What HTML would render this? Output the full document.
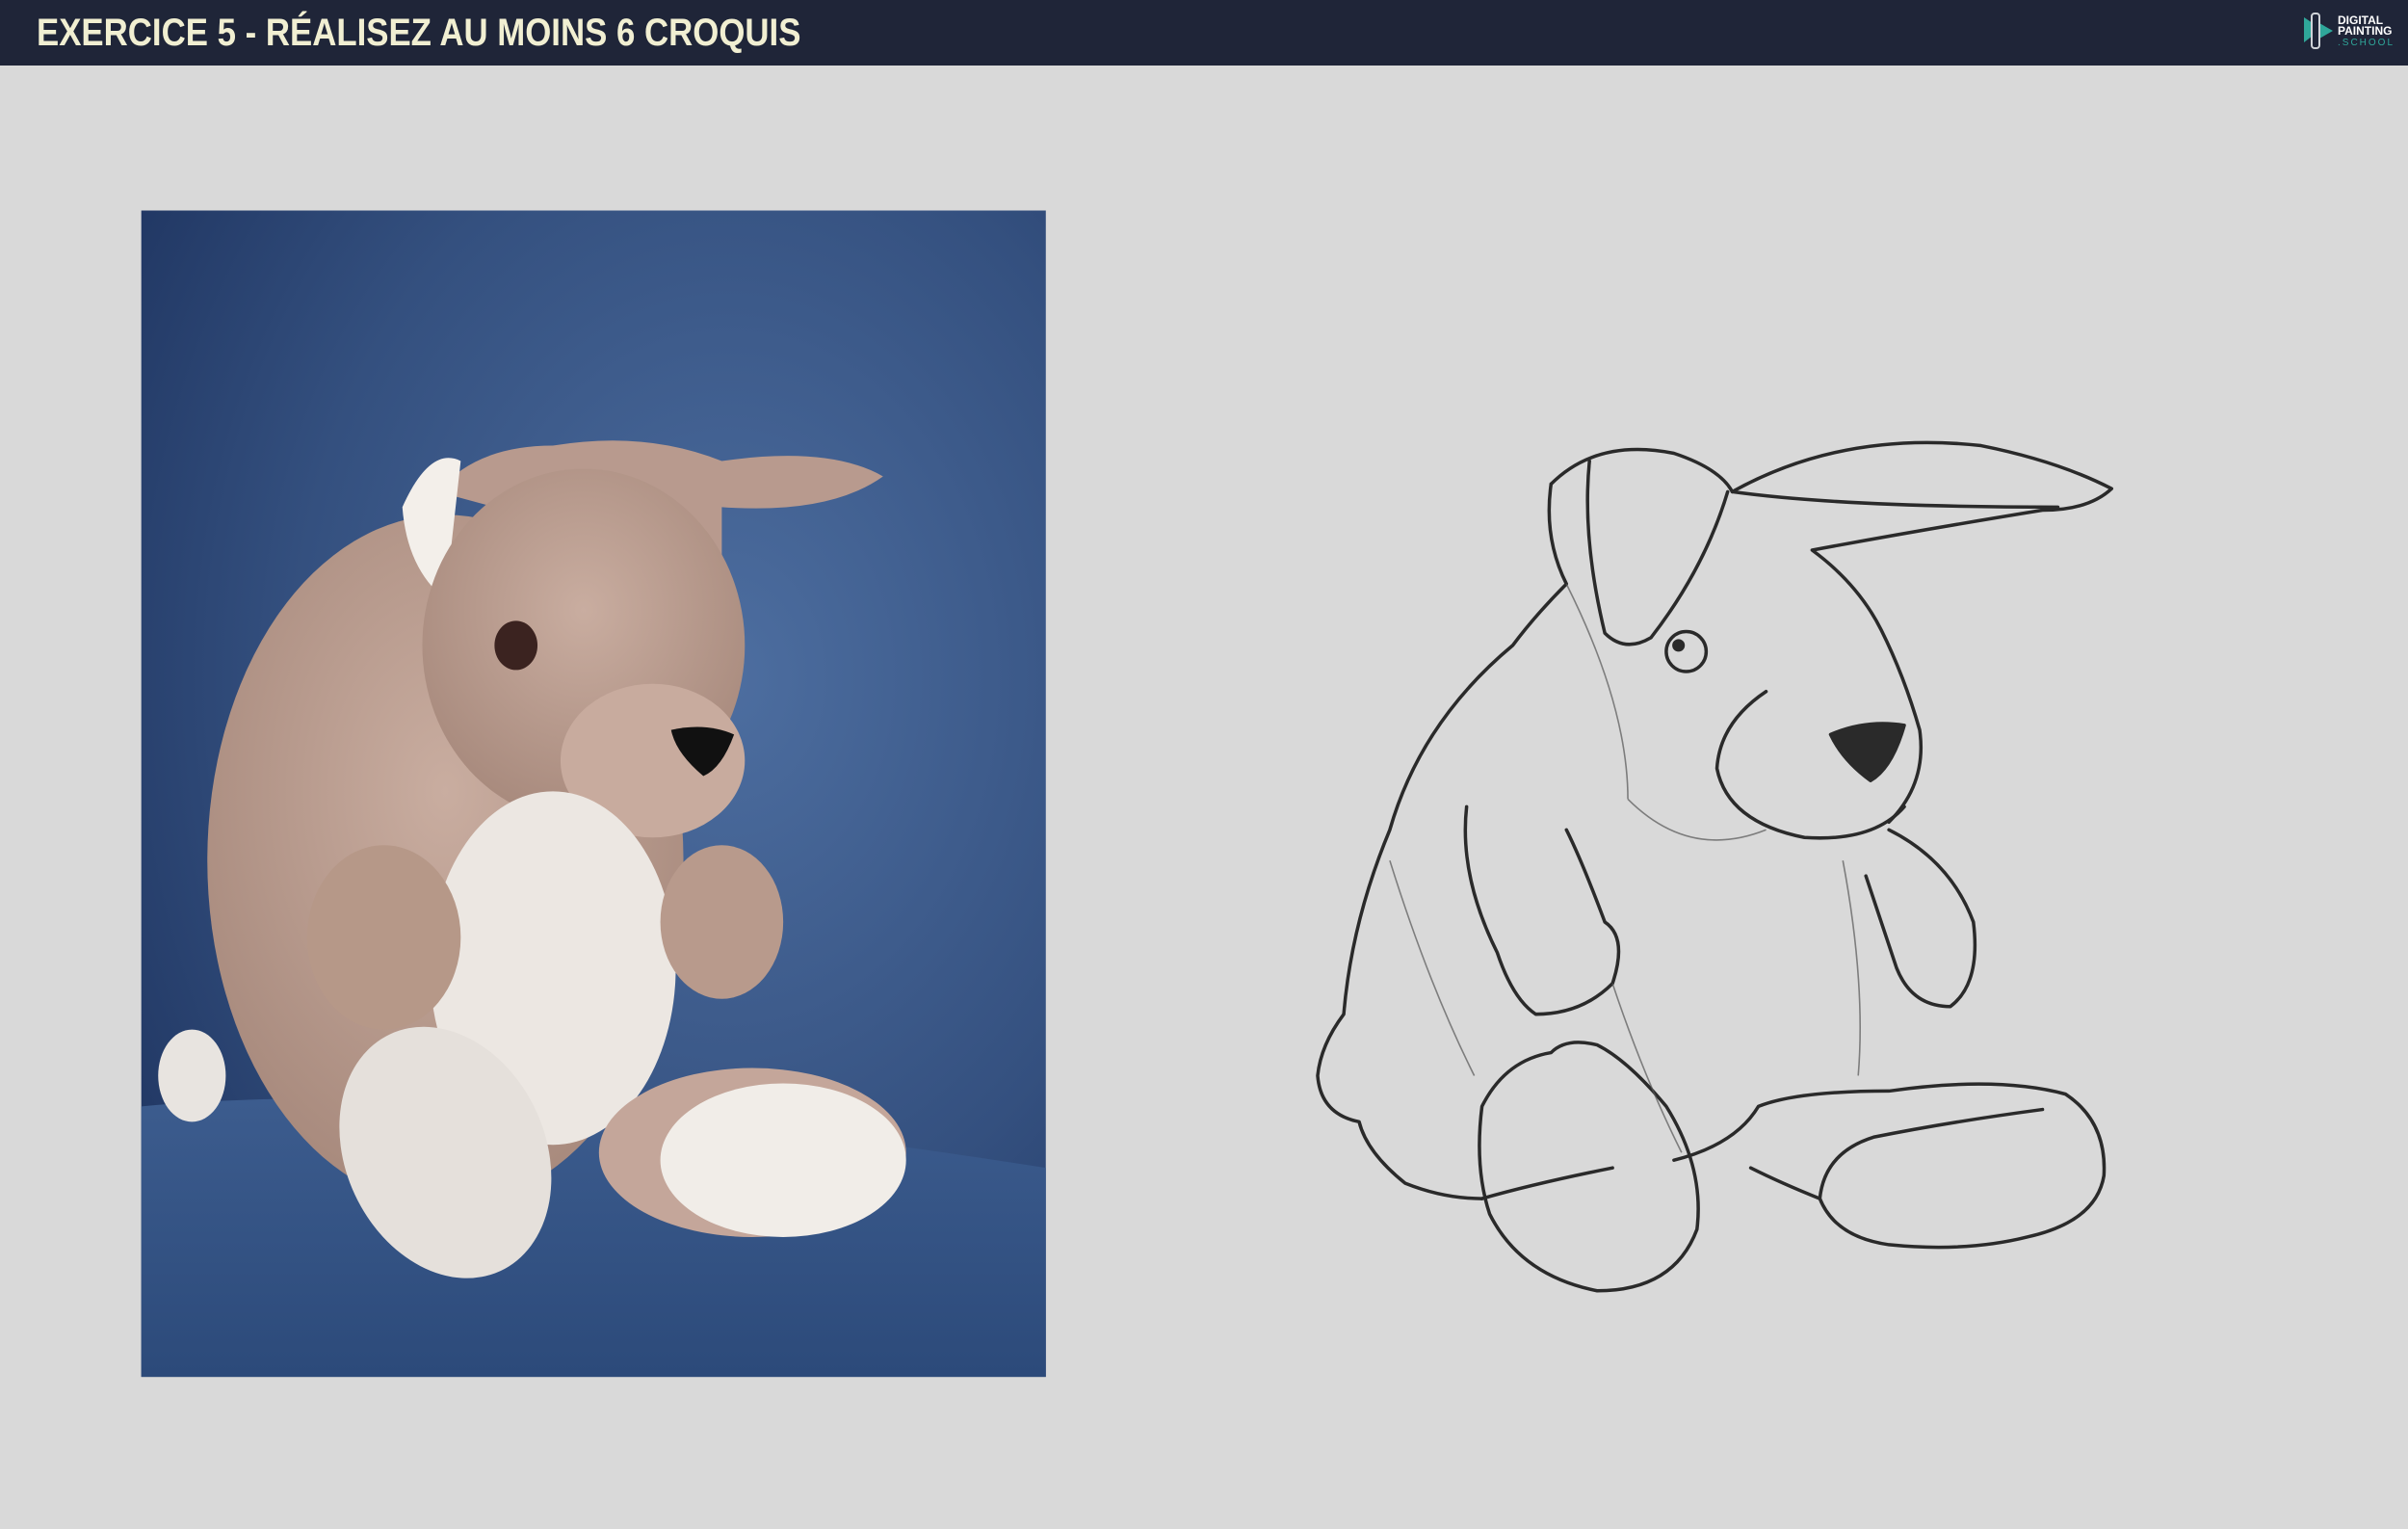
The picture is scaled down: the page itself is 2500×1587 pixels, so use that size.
<!DOCTYPE html>
<html><head><meta charset="utf-8"><style>
html,body{margin:0;padding:0;width:2500px;height:1587px;overflow:hidden;background:#d9d9d9;}
.hdr{position:absolute;left:0;top:0;width:2500px;height:68px;background:#1f2538;}
.ttl{position:absolute;left:38px;top:12px;font-family:"Liberation Sans",sans-serif;font-weight:bold;font-size:40px;color:#f1efd2;white-space:nowrap;transform:scaleX(0.87);transform-origin:0 0;letter-spacing:0px;}
.logo{position:absolute;left:2427px;top:16px;font-family:"Liberation Sans",sans-serif;font-weight:bold;color:#fff;font-size:12px;line-height:11px;}
.logo .s{color:#2fa79a;font-weight:normal;letter-spacing:2px;font-size:10px}
svg{position:absolute;left:0;top:0}
</style></head><body>
<div class="hdr"></div>
<div class="ttl">EXERCICE 5 - RÉALISEZ AU MOINS 6 CROQUIS</div>
<svg width="40" height="50" style="left:2390px;top:10px" viewBox="0 0 40 50">
<polygon points="2,8 20,20 2,34" fill="#2fa79a"/><polygon points="18,14 32,22 18,30" fill="#2fa79a"/>
<rect x="10" y="4" width="8" height="36" rx="3" fill="#1f2538" stroke="#cfd3d8" stroke-width="2"/>
</svg>
<div class="logo">DIGITAL<br>PAINTING<br><span class="s">.SCHOOL</span></div>
<svg width="2500" height="1587" viewBox="0 0 1568 995" preserveAspectRatio="none">
<defs>
<radialGradient id="bg" cx="0.65" cy="0.4" r="0.8"><stop offset="0" stop-color="#4d6ea0"/><stop offset="0.6" stop-color="#34507f"/><stop offset="1" stop-color="#1f3561"/></radialGradient>
<linearGradient id="fl" x1="0" y1="0" x2="0" y2="1"><stop offset="0" stop-color="#3c5c8e"/><stop offset="1" stop-color="#2c4a7a"/></linearGradient>
<radialGradient id="tan" cx="0.5" cy="0.4" r="0.6"><stop offset="0" stop-color="#c9ada0"/><stop offset="1" stop-color="#a88a7d"/></radialGradient>
</defs>
<rect x="92" y="137" width="589" height="759" fill="url(#bg)"/>
<path d="M92 720 Q300 700 681 760 L681 896 L92 896Z" fill="url(#fl)"/>
<ellipse cx="125" cy="700" rx="22" ry="30" fill="#e8e4e0"/>
<ellipse cx="290" cy="560" rx="155" ry="225" fill="url(#tan)"/>
<path d="M285 320 Q310 290 360 290 Q420 280 470 300 Q540 290 575 310 Q540 335 470 330 Q470 350 470 370 Z" fill="#b89a8e"/>
<path d="M262 330 Q280 290 300 300 L290 390 Q265 370 262 330Z" fill="#f3efea"/>
<ellipse cx="380" cy="420" rx="105" ry="115" fill="url(#tan)"/>
<ellipse cx="425" cy="495" rx="60" ry="50" fill="#c8ab9e"/>
<path d="M437 475 Q460 470 478 478 Q470 500 458 505 Q440 490 437 475Z" fill="#111"/>
<ellipse cx="336" cy="420" rx="14" ry="16" fill="#3b2320"/>
<ellipse cx="360" cy="630" rx="80" ry="115" fill="#ece7e2"/>
<ellipse cx="470" cy="600" rx="40" ry="50" fill="#b89a8c"/>
<ellipse cx="250" cy="610" rx="50" ry="60" fill="#b69888"/>
<ellipse cx="290" cy="750" rx="65" ry="85" fill="#e5e0db" transform="rotate(-25 290 750)"/>
<ellipse cx="490" cy="750" rx="100" ry="55" fill="#c4a69a"/>
<ellipse cx="510" cy="755" rx="80" ry="50" fill="#f1ede8"/>
<g fill="none" stroke="#2a2a2a" stroke-width="2.2" stroke-linejoin="round" stroke-linecap="round">
<path d="M1010 315 Q1040 285 1090 295 Q1120 305 1128 320 Q1200 280 1290 290 Q1340 300 1375 318 Q1360 332 1330 332 Q1250 345 1180 358 Q1210 380 1225 410 Q1240 440 1250 475 Q1255 510 1230 535"/>
<path d="M1010 315 Q1005 350 1020 380 Q1000 400 985 420 Q925 470 905 540 Q880 600 875 660 Q860 680 858 700 Q860 725 885 730 Q890 750 915 770 Q940 780 965 780"/>
<path d="M1035 300 Q1030 350 1045 412 Q1058 425 1075 415 Q1110 370 1125 320"/>
<path d="M1128 320 Q1200 330 1340 330"/>
<circle cx="1098" cy="424" r="13"/><circle cx="1093" cy="420" r="3" fill="#2a2a2a"/>
<path d="M1150 450 Q1120 470 1118 500 Q1125 535 1175 545 Q1220 548 1240 525"/>
<path d="M1192 478 Q1215 468 1240 472 Q1232 500 1218 508 Q1200 495 1192 478Z" fill="#2a2a2a"/>
<path d="M1230 540 Q1270 560 1285 600 Q1290 640 1270 655 Q1245 655 1235 630 Q1225 600 1215 570"/>
<path d="M955 525 Q950 570 975 620 Q985 650 1000 660 Q1030 660 1050 640 Q1060 610 1045 600 Q1030 560 1020 540"/>
<path d="M1010 685 Q980 690 965 720 Q960 760 970 790 Q990 830 1040 840 Q1090 840 1105 800 Q1110 760 1085 720 Q1060 690 1040 680 Q1020 675 1010 685Z"/>
<path d="M1090 755 Q1130 745 1145 720 Q1170 710 1230 710 Q1300 700 1345 712 Q1372 730 1370 765 Q1365 795 1320 805 Q1280 815 1230 810 Q1195 805 1185 780 Q1160 770 1140 760"/>
<path d="M1185 780 Q1188 750 1220 740 Q1270 730 1330 722"/>
<path d="M965 780 Q1000 770 1050 760"/>
</g>
<g fill="none" stroke="#555" stroke-width="1" opacity="0.7">
<path d="M1020 380 Q1060 460 1060 520"/><path d="M1060 520 Q1100 560 1150 540"/>
<path d="M1050 640 Q1070 700 1095 750"/><path d="M1200 560 Q1215 640 1210 700"/>
<path d="M905 560 Q930 640 960 700"/>
</g>
</svg>
</body></html>
